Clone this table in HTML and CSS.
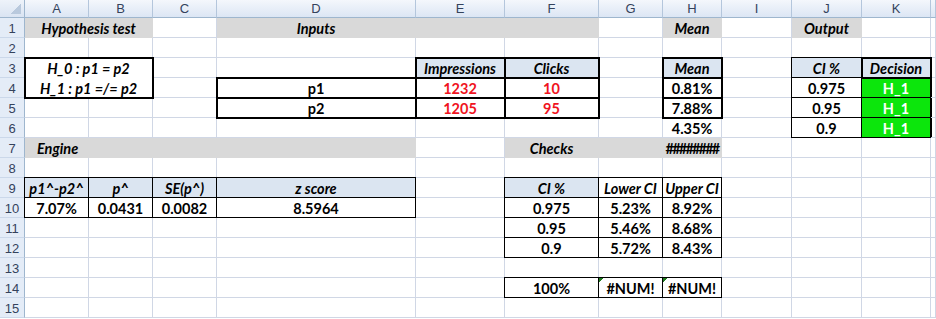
FILE: index.html
```html
<!DOCTYPE html>
<html>
<head>
<meta charset="utf-8">
<link rel="stylesheet" href="styles.css">
</head>
<body>
<div class="sheet">
  <div class="ch corner"></div><div class="ch">A</div><div class="ch">B</div><div class="ch">C</div><div class="ch">D</div><div class="ch">E</div><div class="ch">F</div><div class="ch">G</div><div class="ch">H</div><div class="ch">I</div><div class="ch">J</div><div class="ch">K</div><div class="ch"></div>

  <div class="rh">1</div><div class="c g i span2">Hypothesis test</div><div class="c"></div><div class="c g i">Inputs</div><div class="c g"></div><div class="c g"></div><div class="c"></div><div class="c g i">Mean</div><div class="c"></div><div class="c g i">Output</div><div class="c"></div><div class="c"></div>

  <div class="rh">2</div><div class="c"></div><div class="c"></div><div class="c"></div><div class="c"></div><div class="c"></div><div class="c"></div><div class="c"></div><div class="c"></div><div class="c"></div><div class="c"></div><div class="c"></div><div class="c"></div>

  <div class="rh">3</div><div class="c hyp tk i"><span class="ln">H_0 : p1 = p2</span><span class="ln">H_1 : p1 =/= p2</span></div><div class="c"></div><div class="c"></div><div class="c bl i tk">Impressions</div><div class="c bl i tk">Clicks</div><div class="c"></div><div class="c bl i tk">Mean</div><div class="c"></div><div class="c bl i tn">CI %</div><div class="c bl i tk">Decision</div><div class="c"></div>

  <div class="rh">4</div><div class="c"></div><div class="c tk">p1</div><div class="c tk red">1232</div><div class="c tk red">10</div><div class="c"></div><div class="c tk">0.81%</div><div class="c"></div><div class="c tn">0.975</div><div class="c gr tn rt">H_1</div><div class="c"></div>

  <div class="rh">5</div><div class="c"></div><div class="c"></div><div class="c"></div><div class="c tk">p2</div><div class="c tk red">1205</div><div class="c tk red">95</div><div class="c"></div><div class="c tk">7.88%</div><div class="c"></div><div class="c tn">0.95</div><div class="c gr tn rt">H_1</div><div class="c"></div>

  <div class="rh">6</div><div class="c"></div><div class="c"></div><div class="c"></div><div class="c"></div><div class="c"></div><div class="c"></div><div class="c"></div><div class="c">4.35%</div><div class="c"></div><div class="c tn">0.9</div><div class="c gr tn rt">H_1</div><div class="c"></div>

  <div class="rh">7</div><div class="c g i span4 left">Engine</div><div class="c"></div><div class="c g i">Checks</div><div class="c g"></div><div class="c g hash">########</div><div class="c"></div><div class="c"></div><div class="c"></div><div class="c"></div>

  <div class="rh">8</div><div class="c"></div><div class="c"></div><div class="c"></div><div class="c"></div><div class="c"></div><div class="c"></div><div class="c"></div><div class="c"></div><div class="c"></div><div class="c"></div><div class="c"></div><div class="c"></div>

  <div class="rh">9</div><div class="c bl i tn">p1^-p2^</div><div class="c bl i tn">p^</div><div class="c bl i tn">SE(p^)</div><div class="c bl i tn">z score</div><div class="c"></div><div class="c bl i tn">CI %</div><div class="c i tn">Lower CI</div><div class="c i tn">Upper CI</div><div class="c"></div><div class="c"></div><div class="c"></div><div class="c"></div>

  <div class="rh">10</div><div class="c tn">7.07%</div><div class="c tn">0.0431</div><div class="c tn">0.0082</div><div class="c tn">8.5964</div><div class="c"></div><div class="c tn">0.975</div><div class="c tn">5.23%</div><div class="c tn">8.92%</div><div class="c"></div><div class="c"></div><div class="c"></div><div class="c"></div>

  <div class="rh">11</div><div class="c"></div><div class="c"></div><div class="c"></div><div class="c"></div><div class="c"></div><div class="c tn">0.95</div><div class="c tn">5.46%</div><div class="c tn">8.68%</div><div class="c"></div><div class="c"></div><div class="c"></div><div class="c"></div>

  <div class="rh">12</div><div class="c"></div><div class="c"></div><div class="c"></div><div class="c"></div><div class="c"></div><div class="c tn">0.9</div><div class="c tn">5.72%</div><div class="c tn">8.43%</div><div class="c"></div><div class="c"></div><div class="c"></div><div class="c"></div>

  <div class="rh">13</div><div class="c"></div><div class="c"></div><div class="c"></div><div class="c"></div><div class="c"></div><div class="c"></div><div class="c"></div><div class="c"></div><div class="c"></div><div class="c"></div><div class="c"></div><div class="c"></div>

  <div class="rh">14</div><div class="c"></div><div class="c"></div><div class="c"></div><div class="c"></div><div class="c"></div><div class="c tn">100%</div><div class="c tn err">#NUM!</div><div class="c tn err">#NUM!</div><div class="c"></div><div class="c"></div><div class="c"></div><div class="c"></div>

  <div class="rh">15</div><div class="c"></div><div class="c"></div><div class="c"></div><div class="c"></div><div class="c"></div><div class="c"></div><div class="c"></div><div class="c"></div><div class="c"></div><div class="c"></div><div class="c"></div><div class="c"></div>
</div>
</body>
</html>
```

FILE: styles.css
```css
* { box-sizing: border-box; }
html, body { margin: 0; padding: 0; background: #fff; }

.sheet {
  display: grid;
  grid-template-columns: 25px 64px 64px 64px 199px 89px 94px 64px 59px 70px 70px 69px 1fr;
  grid-template-rows: 18px repeat(15, 20px);
  width: 936px;
  height: 319px;
  overflow: hidden;
  font-family: Lato, "Liberation Sans", sans-serif;
}

.ch {
  background: linear-gradient(#f4f7fc, #dce6f4);
  border-right: 1px solid #b4c6dc;
  border-bottom: 1px solid #9eb6ce;
  font: 13px "Liberation Sans", Arial, sans-serif;
  color: #34425c;
  display: flex;
  align-items: center;
  justify-content: center;
}

.corner {
  background:
    linear-gradient(135deg, transparent 50%, #b9c9dd 50%) right 3px bottom 3px / 10px 10px no-repeat,
    linear-gradient(#eef3fa, #dae4f2);
  border-right: 1px solid #9eb6ce;
}

.rh {
  background: #e4ecf7;
  border-right: 1px solid #9eb6ce;
  border-bottom: 1px solid #cbd8ea;
  font: 13px "Liberation Sans", Arial, sans-serif;
  color: #34425c;
  display: flex;
  align-items: center;
  justify-content: center;
  padding-top: 1px;
}

.c {
  border-right: 1px solid #d0d7e5;
  border-bottom: 1px solid #d0d7e5;
  display: flex;
  align-items: center;
  justify-content: center;
  font-weight: 700;
  font-size: 14.5px;
  color: #000;
  white-space: nowrap;
  padding-top: 2px;
}

.i { font-style: italic; }
.span2 { grid-column: span 2; }
.span4 { grid-column: span 4; }
.left { justify-content: flex-start; padding-left: 12px; }
.red { color: #f0141e; }

.g { background: #d9d9d9; border-color: transparent; }
.bl { background: #dbe5f1; }
.gr { background: #0ce60c; color: #fff; }

.tk {
  outline: 2px solid #000;
  outline-offset: -1px;
  z-index: 1;
}

.tn {
  border-right-color: #000;
  border-bottom-color: #000;
  box-shadow: -1px 0 0 #000, 0 -1px 0 #000, -1px -1px 0 #000;
}

.rt {
  box-shadow: -1px 0 0 #000, 0 -1px 0 #000, -1px -1px 0 #000, 1px 0 0 #000;
}

.hyp {
  grid-column: span 2;
  grid-row: span 2;
  flex-direction: column;
  padding-top: 0;
  border-color: transparent;
}

.ln {
  height: 20px;
  display: flex;
  align-items: center;
  padding-top: 2px;
}

.hash { letter-spacing: -1.8px; }

.err {
  background: linear-gradient(135deg, #1f7a1f 0 3px, transparent 3px) left top / 6px 6px no-repeat, #fff;
}
```
